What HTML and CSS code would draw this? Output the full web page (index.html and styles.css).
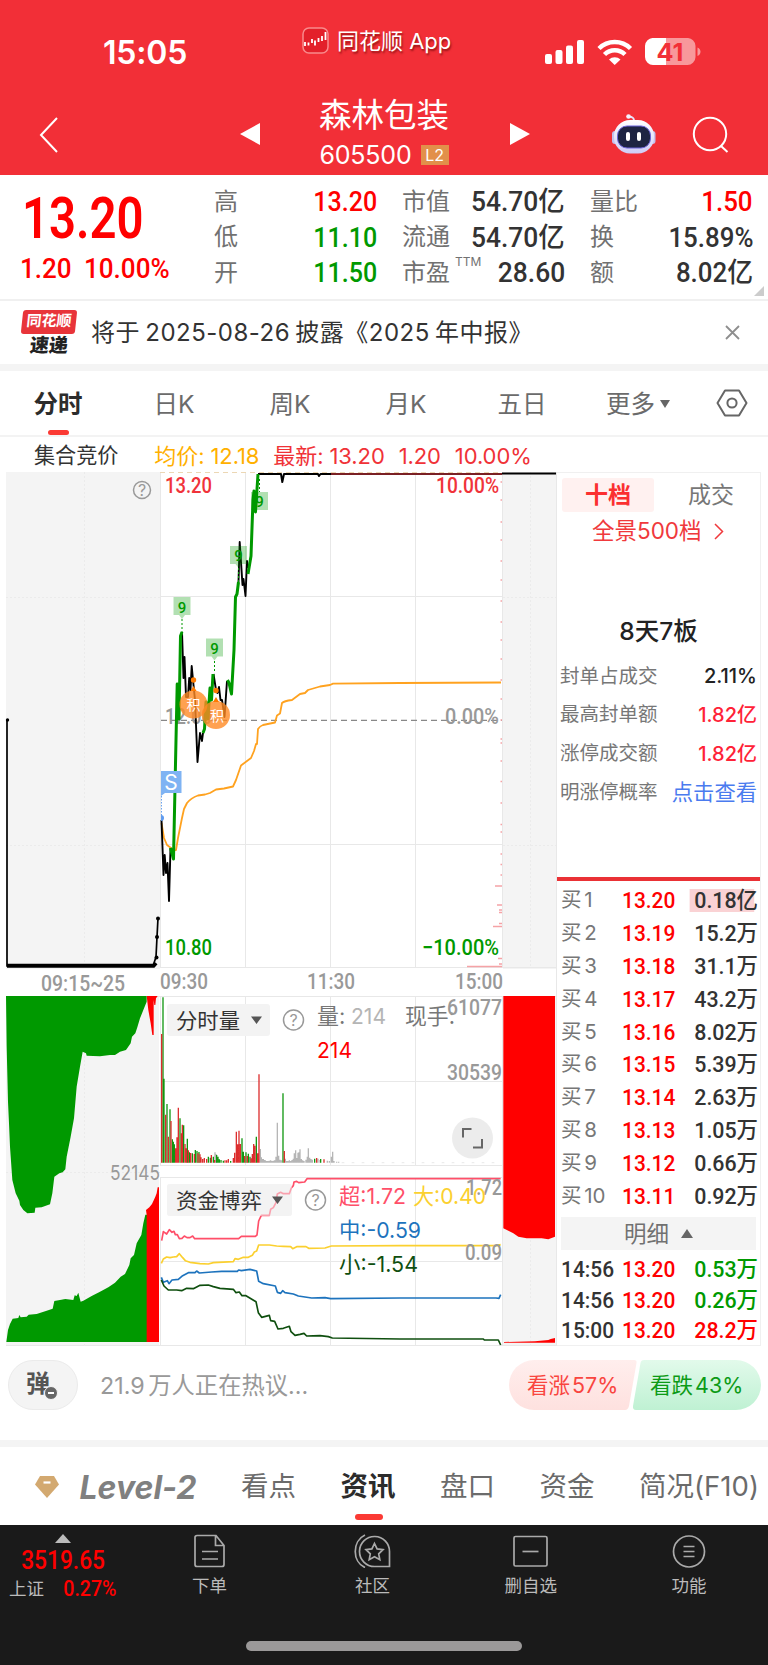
FILE: index.html
```
<!DOCTYPE html>
<html lang="zh-CN">
<head>
  <meta charset="utf-8">
  <meta name="viewport" content="width=device-width, initial-scale=1">
  <title>森林包装 605500</title>
  <link rel="stylesheet" href="styles.css">
</head>
<body>

<!-- header -->
<header class="header">
  <div class="status">
    <span class="time">15:05</span>
    <div class="app">
      <svg width="27" height="27" viewBox="0 0 27 27">
        <rect x="1" y="1" width="25" height="25" rx="6" fill="#e3202a" stroke="#f98a8c" stroke-width="1.5"/>
        <path d="M3 15v4M6.500 15.500v3M10 12v4M13 13.500v5M16.500 11v4M20 9v5M23.500 5v8" stroke="#fff" stroke-width="1.800"/>
      </svg>
      <span>同花顺 App</span>
    </div>
    <svg class="signals" width="156" height="28" viewBox="545 38 156 28">
      <g fill="#fff">
        <rect x="545" y="54" width="7" height="10" rx="2"/>
        <rect x="555.500" y="50" width="7" height="14" rx="2"/>
        <rect x="566" y="45.500" width="7" height="18.500" rx="2"/>
        <rect x="577" y="40" width="7" height="24" rx="2"/>
      </g>
      <g fill="none" stroke="#fff" stroke-width="4.500">
        <path d="M599 48.500a22.500 22.500 0 0 1 31.500 0"/>
        <path d="M604.500 54.500a14.500 14.500 0 0 1 20.500 0"/>
      </g>
      <path d="M609 59.500a8.500 8.500 0 0 1 11.500 0L614.700 65z" fill="#fff"/>
      <path d="M653 38h34a8 8 0 0 1 8.500 8v11a8 8 0 0 1-8.500 8h-34z" fill="#f8989b"/>
      <path d="M666 38h-12.500a8 8 0 0 0-8.500 8v11a8 8 0 0 0 8.500 8H666z" fill="#fff"/>
      <path d="M697.500 47.500c4 1.500 4 7 0 8.500z" fill="#f8989b"/>
      <text x="656.500" y="60.500" textLength="27" lengthAdjust="spacingAndGlyphs" class="batt">41</text>
    </svg>
  </div>
  <div class="nav">
    <svg class="back" width="20" height="36" viewBox="0 0 20 36"><path d="M18 1L2 18l16 17" fill="none" stroke="#fff" stroke-width="2"/></svg>
    <i class="tri-l"></i>
    <div class="stock">
      <div class="name">森林包装</div>
      <div class="code">605500 <b>L2</b></div>
    </div>
    <i class="tri-r"></i>
    <svg class="bot" width="46" height="42" viewBox="611 113 46 42">
      <defs>
        <linearGradient id="head" x1="0" y1="0" x2="0" y2="1"><stop offset="0" stop-color="#fff"/><stop offset="1" stop-color="#cfccf6"/></linearGradient>
      </defs>
      <path d="M634 121c0-3-1-4-5-4.500" fill="none" stroke="#e6e3fb" stroke-width="2"/>
      <circle cx="628.500" cy="116.500" r="2.300" fill="#f4f2ff"/>
      <rect x="612" y="131" width="6" height="13" rx="3" fill="#c4c1ee"/>
      <rect x="649.500" y="131" width="6" height="13" rx="3" fill="#c4c1ee"/>
      <rect x="614" y="120" width="40" height="33.500" rx="16" fill="url(#head)"/>
      <rect x="617.500" y="126" width="33" height="22" rx="9.500" fill="#1e2442" stroke="#6b62d8" stroke-width="1"/>
      <rect x="626" y="132" width="4" height="9" rx="2" fill="#fff"/>
      <rect x="637" y="132" width="4" height="9" rx="2" fill="#fff"/>
    </svg>
    <svg class="search" width="38" height="38" viewBox="0 0 38 38" fill="none" stroke="#fff" stroke-width="2"><circle cx="18" cy="18" r="16.200"/><path d="M29 30l6.500 6"/></svg>
  </div>
</header>

<!-- quote -->
<section class="quote">
  <div class="last">
    <div class="price"><span class="din">13.20</span></div>
    <div class="chg"><span class="din">1.20</span><span class="din">10.00%</span></div>
  </div>
  <dl class="c1">
    <div><dt>高</dt><dd class="red din">13.20</dd></div>
    <div><dt>低</dt><dd class="green din">11.10</dd></div>
    <div><dt>开</dt><dd class="green din">11.50</dd></div>
  </dl>
  <dl class="c2">
    <div><dt>市值</dt><dd class="din">54.70亿</dd></div>
    <div><dt>流通</dt><dd class="din">54.70亿</dd></div>
    <div><dt>市盈<sup>TTM</sup></dt><dd class="din">28.60</dd></div>
  </dl>
  <dl class="c3">
    <div><dt>量比</dt><dd class="red din">1.50</dd></div>
    <div><dt>换</dt><dd class="din">15.89%</dd></div>
    <div><dt>额</dt><dd class="din">8.02亿</dd></div>
  </dl>
  <i class="corner"></i>
</section>

<!-- notice -->
<section class="notice">
  <div class="express">
    <b class="ths">同花顺</b>
    <b class="sd">速递</b>
  </div>
  <p>将于 2025-08-26 披露《2025 年中报》</p>
  <svg width="15" height="15" viewBox="0 0 15 15"><path d="M1 1l13 13M14 1L1 14" stroke="#8e8e8e" stroke-width="1.800"/></svg>
</section>

<!-- period tabs -->
<nav class="periods">
  <a class="on">分时</a><a>日K</a><a>周K</a><a>月K</a><a>五日</a><a>更多<i></i></a>
  <svg width="32" height="28" viewBox="0 0 32 28" fill="none" stroke="#666" stroke-width="2"><path d="M9 1.500h14L30.500 14 23 26.500H9L1.500 14z" stroke-linejoin="round"/><circle cx="16" cy="14" r="4.600"/></svg>
</nav>
<div class="legend">
  <span>集合竞价</span>
  <span class="avg">均价: 12.18</span>
  <span class="now">最新: 13.20</span>
  <span class="now">1.20</span>
  <span class="now">10.00%</span>
</div>

<!-- chart and order book -->
<main class="board">
  <svg class="chart" width="557" height="875" viewBox="0 472 557 875">
    <!-- auction panels -->
    <g fill="#f4f4f4">
      <rect x="6" y="472" width="154" height="497"/>
      <rect x="503" y="472" width="53" height="497"/>
      <rect x="6" y="996" width="153" height="350"/>
      <rect x="503" y="996" width="53" height="350"/>
    </g>
    <!-- grid -->
    <g fill="none" stroke="#e8e8e8">
      <path d="M160.500 472V968M245.500 472V968M330.500 472V968M415.500 472V968M502.500 472V968M160 596.500H502M160 844.500H502M160 967.500H556"/>
      <path d="M6 996.500H556M160.500 996V1165M245.500 996V1165M330.500 996V1165M415.500 996V1165M502.500 996V1346M160 1081.500H502M160 1165.500H502"/>
      <path d="M160.500 1177V1346M245.500 1177V1346M330.500 1177V1346M415.500 1177V1346M160 1177.500H502M160 1261.500H502M6 1345.500H557M556.500 472V1346"/>
      <path d="M84.500 472V968M6 597.500H160M6 845.500H160M84.500 996V1346M6 1172.500H160M530.500 472V968M503 597.500H556M503 845.500H556M530.500 996V1346" stroke-dasharray="2 2" stroke="#ebebeb"/>
    </g>
    <path d="M160 472.500H502" stroke="#ecd7b4" stroke-dasharray="5 4"/>
    <path d="M161 720.300H502" stroke="#888" stroke-width="1.200" stroke-dasharray="6 4"/>

    <g class="axis">
      <text x="165" y="493" class="up" textLength="47" lengthAdjust="spacingAndGlyphs">13.20</text>
      <text x="436" y="493" class="up" textLength="63" lengthAdjust="spacingAndGlyphs">10.00%</text>
      <text x="165" y="724" textLength="47" lengthAdjust="spacingAndGlyphs">12.00</text>
      <text x="445" y="724" textLength="54" lengthAdjust="spacingAndGlyphs">0.00%</text>
      <text x="165" y="955" class="down" textLength="47" lengthAdjust="spacingAndGlyphs">10.80</text>
      <text x="422" y="955" class="down" textLength="77" lengthAdjust="spacingAndGlyphs">−10.00%</text>
      <text x="41" y="990.500" textLength="84" lengthAdjust="spacingAndGlyphs">09:15~25</text>
      <text x="160" y="989" textLength="48" lengthAdjust="spacingAndGlyphs">09:30</text>
      <text x="307" y="989" textLength="48" lengthAdjust="spacingAndGlyphs">11:30</text>
      <text x="455" y="989" textLength="48" lengthAdjust="spacingAndGlyphs">15:00</text>
      <text x="110" y="1179.500" class="small" textLength="50" lengthAdjust="spacingAndGlyphs">52145</text>
    </g>
    <g class="help">
      <circle cx="142" cy="490" r="8.500"/><text x="142" y="495.500">?</text>
    </g>

    <!-- auction price -->
    <path d="M7 720V966H153L156 957L157 937L158 918" fill="none" stroke="#000" stroke-width="1.700"/>
    <path d="M7 965.800H153.500L156 963" fill="none" stroke="#000" stroke-width="4"/>
    <circle cx="7.500" cy="720" r="1.700"/><circle cx="158" cy="918.500" r="2"/><circle cx="157" cy="937" r="2"/><circle cx="156.500" cy="957.500" r="2"/>

    <!-- price levels on the right edge -->
    <path d="M467 966.500H502M493 926.500H502M495 886H502M497 905H502M498 958.500H502M499 964H502M499 910H502M499 912.500H502M499 923.500H502M500.500 720H502M500.500 739H502M500.500 743H502M500.500 761H502M500.500 781.500H502M500.500 803H502M500.500 824.500H502M500.500 832H502M500.500 854H502M500.500 864.500H502M500.500 875H502M500.500 482H502M500.500 500H502M500.500 522H502M500.500 540H502M500.500 561H502M500.500 580H502M500.500 601H502M500.500 622H502M500.500 640H502M500.500 659H502M500.500 680H502M500.500 699H502" stroke="#f5a3a6" stroke-width="1.600"/>

    <!-- average line -->
    <path class="line" stroke="#ffa21f" stroke-width="1.800" d="M161.500 823L164 838L167 845L171 848L173 851L176 850L178 838L182 818L184 809L187 803Q191 798 198 795.500L205 794.500L210 793L216 789.500L224 788.500L233 786.500L236 780L241 765.500L251 758L254 751L256 744L257 744L258 729Q260 726 263 725L275 722.500L277 715.500L280 713.500L282 703Q284 701 292 700L300 694L305 693L308 690L320 686.500L330 685L333 683.700L400 683L501 682.500"/>

    <!-- price -->
    <g class="line" stroke-width="1.900">
      <path stroke="#000" d="M161.500 820L163.500 875L164.700 855L166 873L167.500 863L169 901L170.500 848"/>
      <path stroke="#000" d="M182 632L183.500 678L184.500 657L186 697L188 697L189.200 678L190.500 690L191.700 666L193 680L195 700L197.500 762L200 733L202 741L203 733"/>
      <path stroke="#000" d="M213.500 674L216 690L217.500 693L219 687L220.500 700L222 700L224.500 717L227 681"/>
      <path stroke="#000" d="M238.500 582L239.700 542L242.500 585L243.500 579L245.500 596L247 561L248 568"/>
      <path stroke="#000" stroke-width="2" d="M258 474H281L282.300 482L284 474H318L319 476L320.500 474H331"/>
    </g>
    <g class="line" stroke="#090" stroke-width="3">
      <path d="M170.500 848L173.500 859L176 740L177.200 684L179 719L180.500 636L182 632"/>
      <path d="M203 733L204.500 729L206 702L208 719L210 688L211.500 700L213 674"/>
      <path d="M227.500 680L229 683L231.500 694L234 650L235.500 597L237 594L238.500 582"/>
      <path d="M248 574L251 556L253 500L254 491L255.500 512L258 474"/>
    </g>
    <path d="M331 474H502" stroke="#7a2024" stroke-width="2"/>
    <path d="M502 473.500H556" stroke="#000" stroke-width="2"/>

    <!-- nine-count flags -->
    <g class="flag">
      <path d="M173.500 597h17v18h-5.500l-3 4-3-4h-5.500z"/><path d="M206 638.500h17v18h-5.500l-3 4-3-4H206z"/>
      <path d="M230 546h17v18h-5.500l-3 4-3-4H230z"/><path d="M251 492h17v18h-17z"/>
      <path class="stem" d="M182 619V632M214.500 661V673M238.500 568V582M259.500 479V492"/>
      <text x="182" y="612.500">9</text><text x="214.500" y="654">9</text><text x="238.500" y="561">9</text><text x="259.500" y="507">9</text>
    </g>
    <!-- event badges -->
    <g fill="#ff8a24" fill-opacity=".8">
      <circle cx="193.500" cy="704.500" r="14"/><circle cx="216" cy="715" r="14"/>
    </g>
    <g fill="#ff7a00"><circle cx="193.500" cy="680" r="2.700"/><circle cx="216" cy="690.500" r="2.700"/><path d="M190.500 691l3-5 3 5zM213 702l3-5 3 5z"/></g>
    <text class="event" x="193.500" y="710">积</text><text class="event" x="217" y="720.500">积</text>
    <!-- sell point -->
    <path d="M161 771h20.500v22H165l-4 3z" fill="#7fb3f3"/>
    <path d="M161.500 796V817" stroke="#6aa4ef" stroke-dasharray="1.500 1.500"/>
    <path d="M161 815a3 3 0 0 1 0 6z" fill="#5f9bef"/>
    <text class="sell" x="171" y="789.500">S</text>

    <!-- auction volume -->
    <g transform="translate(0 980) scale(.33333)">
      <path fill="#090" d="M18 48L20 200L24 365L27 430L30 500L37 600L47 640L58 662L60 675L70 690L82 700L104 698L106 683L125 682L150 673L157 640L163 590L178 580L188 577L196 568L200 530L212 470L222 415L230 320L240 260L248 215L258 220L260 227L300 229L330 225L345 225L360 215L378 210L392 190L396 170L406 160L412 142L420 115L430 90L440 65V48z"/>
      <path fill="red" d="M440 48L445 90L452 130L457 165H461V60L463 75H466L468 55L473 48z"/>
      <path fill="#090" d="M19 1086L24 1050L30 1032L38 1016L55 1014L58 1005L62 1012L80 1010L86 1004L110 1002L140 992L158 986L163 963L180 960L196 957L220 960L224 946L230 948L235 938L238 950L242 965L250 962L275 948L300 935L325 922L345 908L362 890L375 882L388 855L392 835L402 825L410 790L424 765L430 730L436 704H441V1086z"/>
      <path fill="red" d="M438 690L448 682L456 672L466 650L470 640L473 622H477V1086H440V704z"/>
      <path fill="red" d="M1510 48H1665V770L1645 778L1625 775L1580 775L1555 770L1540 760L1525 752L1510 745z"/>
      <path fill="red" d="M1512 1086L1605 1084L1645 1080L1652 1077L1665 1074V1088H1512z"/>
    </g>

    <!-- volume bars -->
    <g transform="translate(0 980) scale(.33333)" fill="none" stroke-width="3.900">
      <path stroke="#b5b5b5" d="M645 548V517M648 548V522M781 548V507M784 548V532M787 548V537M790 548V537M793 548V540M796 548V541M800 548V543M804 548V543M808 548V542M812 548V541M816 548V543M820 548V542M824 548V541M828 548V530M832 548V428M836 548V527M840 548V539M844 548V541M856 548V536M860 548V543M864 548V543M868 548V541M872 548V543M876 548V540M880 548V536M883 548V520M887 548V511M890 548V534M894 548V518M897 548V517M900 548V508M904 548V537M908 548V541M912 548V543M918 548V539M922 548V530M925 548V505M929 548V533M933 548V537M937 548V539M954 548V536M960 548V540M982 548V542M988 548V543M994 548V530M998 548V515M1002 548V543M1010 548V545M1016 548V545"/>
      <path stroke="#0f960f" d="M489 548V52M492 548V296M501 548V372M510 548V388M517 548V478M520 548V485M523 548V493M540 548V415M551 548V436M562 548V476M568 548V517M577 548V520M586 548V510M591 548V513M597 548V516M625 548V530M631 548V533M640 548V530M650 548V525M654 548V530M658 548V538M663 548V540M670 548V542M692 548V543M726 548V475M730 548V515M738 548V517M745 548V521M750 548V530M769 548V470M849 548V340M944 548V536M962 548V537"/>
      <path stroke="#dc2c2c" d="M485 548V162M497 548V404M505 548V470M513 548V423M527 548V505M531 548V472M535 548V383M544 548V460M547 548V434M555 548V492M559 548V505M565 548V511M572 548V519M583 548V522M594 548V520M600 548V523M603 548V532M608 548V537M613 548V534M620 548V537M634 548V525M644 548V540M675 548V541M680 548V541M685 548V537M700 548V534M704 548V518M709 548V455M713 548V493M717 548V452M721 548V492M734 548V528M742 548V528M753 548V535M757 548V522M761 548V492M765 548V497M773 548V520M777 548V283M853 548V513M950 548V534M972 548V538"/>
      <path stroke="#ddd" stroke-width="2" stroke-dasharray="8 22" d="M1025 548H1505"/>
    </g>

    <!-- fund flow -->
    <rect x="167" y="1184" width="125" height="32" rx="3" fill="#f3f3f3"/>
    <g transform="translate(0 980) scale(.33333)" class="line" stroke-width="5">
      <path stroke="#ff4f69" d="M485 782L490 755L500 762L508 749L516 757L522 754L526 764L532 764L538 776L546 775L553 768L561 773L570 773L578 768L584 776H716L724 769H766L771 765L776 723L784 706H808L812 688L820 683L828 668L832 642L842 637L850 641H868L874 624L880 617L882 606L890 604L896 608L914 606L921 596H1502"/>
      <path stroke="#fbd02f" d="M484 850L490 837L500 831L510 833L520 831L530 830L538 821L548 833L556 842L570 847L600 851L625 852L640 848L700 845L705 836L715 838L730 832L745 832L757 826L763 816L770 813L776 795L808 795L830 798L850 799L872 800L878 806L890 800H918L926 805L975 804L994 798L1200 797H1490L1502 794"/>
      <path stroke="#1d73bd" d="M484 892L490 907L502 902L507 911L516 900L535 898L548 887L565 878H585L590 873L598 879L635 876L665 874L712 874L716 870L724 872L750 868L770 873L776 904L790 911L826 918L832 937L842 940L848 932L855 938L880 942L895 948L935 954L975 953L992 956L1200 954H1488L1497 955L1502 944"/>
      <path stroke="#0f4f0f" d="M484 900L492 918L505 930L530 930L545 932L560 925L580 926L600 916L625 915L640 920L660 925L700 928L708 938L718 936L726 947L738 947L768 965L775 998L785 1012L808 1006L812 1022L824 1024L834 1047L850 1045L868 1039L873 1055L885 1066L900 1063L912 1060L920 1068L960 1067L985 1070L997 1074L1200 1077H1450L1453 1080H1495L1502 1095"/>
    </g>
    <rect x="167" y="1184" width="125" height="32" rx="3" fill="#f3f3f3" fill-opacity=".5"/>

    <!-- chart controls -->
    <rect x="167" y="1004" width="103" height="32" rx="3" fill="#f3f3f3"/>
    <g class="ctl">
      <text x="176" y="1027.500" textLength="64" lengthAdjust="spacingAndGlyphs">分时量</text>
      <text x="176" y="1207.500" textLength="86" lengthAdjust="spacingAndGlyphs">资金博弈</text>
      <path d="M251 1016.500h11l-5.500 7.500zM272 1196.500h11l-5.500 7.500z" fill="#555"/>
    </g>
    <g class="help">
      <circle cx="293.500" cy="1020" r="10"/><text x="293.500" y="1026">?</text>
      <circle cx="315.500" cy="1200" r="10"/><text x="315.500" y="1206">?</text>
    </g>
    <g class="vals">
      <text x="317" y="1024" fill="#777">量:</text>
      <text x="351" y="1024" fill="#b5b5b5" textLength="35" lengthAdjust="spacingAndGlyphs">214</text>
      <text x="405" y="1024" fill="#777" textLength="50" lengthAdjust="spacingAndGlyphs">现手:</text>
      <text x="317" y="1058" fill="red" textLength="35" lengthAdjust="spacingAndGlyphs">214</text>
    </g>
    <g class="axis">
      <text x="447" y="1014.500" textLength="55" lengthAdjust="spacingAndGlyphs">61077</text>
      <text x="447" y="1079.500" textLength="55" lengthAdjust="spacingAndGlyphs">30539</text>
      <text x="466" y="1194.500" textLength="36" lengthAdjust="spacingAndGlyphs">1.72</text>
      <text x="465" y="1259.500" textLength="37" lengthAdjust="spacingAndGlyphs">0.09</text>
    </g>
    <g class="vals">
      <text x="339" y="1204" fill="#ff4f69" textLength="67" lengthAdjust="spacingAndGlyphs">超:1.72</text>
      <text x="413" y="1204" fill="#fbd02f" textLength="73" lengthAdjust="spacingAndGlyphs">大:0.40</text>
      <text x="339" y="1238" fill="#1d73bd" textLength="82" lengthAdjust="spacingAndGlyphs">中:-0.59</text>
      <text x="339" y="1272" fill="#0f4f0f" textLength="79" lengthAdjust="spacingAndGlyphs">小:-1.54</text>
    </g>
    <circle cx="472.500" cy="1138" r="20.500" fill="#ececec"/>
    <path d="M463 1137.500V1129H471.500M473 1147.500H482V1139" fill="none" stroke="#666" stroke-width="2"/>
  </svg>

  <aside class="book">
    <div class="switch"><b>十档</b><span>成交</span></div>
    <div class="pano">全景500档<svg width="10" height="17" viewBox="0 0 10 17"><path d="M1 1l7.500 7.500L1 16" fill="none" stroke="#f0393c" stroke-width="1.500"/></svg></div>
    <div class="streak">8天7板</div>
    <ul class="stats">
      <li>封单占成交<b>2.11%</b></li>
      <li>最高封单额<b class="rose">1.82亿</b></li>
      <li>涨停成交额<b class="rose">1.82亿</b></li>
      <li>明涨停概率<a>点击查看</a></li>
    </ul>
    <ul class="bids">
      <li><span>买 1</span><b>13.20</b><em class="hot">0.18亿</em></li>
      <li><span>买 2</span><b>13.19</b><em>15.2万</em></li>
      <li><span>买 3</span><b>13.18</b><em>31.1万</em></li>
      <li><span>买 4</span><b>13.17</b><em>43.2万</em></li>
      <li><span>买 5</span><b>13.16</b><em>8.02万</em></li>
      <li><span>买 6</span><b>13.15</b><em>5.39万</em></li>
      <li><span>买 7</span><b>13.14</b><em>2.63万</em></li>
      <li><span>买 8</span><b>13.13</b><em>1.05万</em></li>
      <li><span>买 9</span><b>13.12</b><em>0.66万</em></li>
      <li><span>买 10</span><b>13.11</b><em>0.92万</em></li>
    </ul>
    <div class="detail">明细<i></i></div>
    <ul class="bids trades">
      <li><time>14:56</time><b>13.20</b><em class="green">0.53万</em></li>
      <li><time>14:56</time><b>13.20</b><em class="green">0.26万</em></li>
      <li><time>15:00</time><b>13.20</b><em class="red">28.2万</em></li>
    </ul>
  </aside>
</main>

<!-- discussion -->
<section class="talk">
  <div class="danmu">弹<i></i></div>
  <p>21.9 万人正在热议...</p>
  <div class="vote">
    <svg width="252" height="50" viewBox="0 0 252 50">
      <defs>
        <linearGradient id="up" x1="0" y1="0" x2="0" y2="1"><stop offset="0" stop-color="#ffeeed"/><stop offset="1" stop-color="#fee1df"/></linearGradient>
        <linearGradient id="dn" x1="0" y1="0" x2="0" y2="1"><stop offset="0" stop-color="#e2faeb"/><stop offset="1" stop-color="#bff1d3"/></linearGradient>
      </defs>
      <path fill="url(#up)" d="M25 0H125q3 0 2.500 3L120 46q-1 4-4 4H25a25 25 0 0 1 0-50z"/>
      <path fill="url(#dn)" d="M227 0H135q-3 0-3.500 3L124 46q-.5 4 3 4H227a25 25 0 0 0 0-50z"/>
    </svg>
    <span class="bull">看涨 57%</span><span class="bear">看跌 43%</span>
  </div>
</section>

<!-- content tabs -->
<nav class="tabs">
  <svg width="24" height="22" viewBox="0 0 24 22"><path d="M5 0h14l5 8.500L12 22 0 8.500z" fill="#d3a970"/><path d="M8.500 6.500h7" stroke="#fff" stroke-width="2.200"/></svg>
  <a class="lv2">Level-2</a><a>看点</a><a class="on">资讯</a><a>盘口</a><a>资金</a><a>简况(F10)</a>
</nav>

<!-- bottom bar -->
<footer class="bar">
  <div class="index">
    <i></i>
    <div class="pt"><span class="din">3519.65</span></div>
    <div class="sub">上证<span class="din">0.27%</span></div>
  </div>
  <div class="item">
    <svg width="32" height="34" viewBox="0 0 32 34"><path d="M3 1.500h19l8 10v19a2 2 0 0 1-2 2H3a2 2 0 0 1-2-2V3.500a2 2 0 0 1 2-2zM21.500 1.500v10h8.500M8 17.500h16M8 25h16"/></svg>
    下单
  </div>
  <div class="item">
    <svg width="37" height="34" viewBox="0 0 37 34"><path d="M35.500 32.500V18A15 15 0 1 0 20.500 32.500zM11 1C-2 7-2 28 11 33.500M20.500 9.500l2.600 5.400 5.900.8-4.300 4.100 1.100 5.900-5.300-2.900-5.300 2.900 1.100-5.900-4.300-4.100 5.900-.8z"/></svg>
    社区
  </div>
  <div class="item">
    <svg width="35" height="34" viewBox="0 0 35 34"><rect x="1" y="2.500" width="33" height="29.500" rx="1.500"/><path d="M9.500 17.500h16"/></svg>
    删自选
  </div>
  <div class="item">
    <svg width="34" height="34" viewBox="0 0 34 34"><circle cx="17" cy="17.500" r="15.500"/><path d="M11.500 12.500h11M11.500 17.500h11M11.500 22.500h11"/></svg>
    功能
  </div>
  <i class="home"></i>
</footer>

</body>
</html>
```
FILE: styles.css
```
* {box-sizing: border-box}

body {
  margin: 0;
  width: 768px;
  height: 1665px;
  overflow: hidden;
  background: #fff;
  color: #333;
  font-family: Inter, "Noto Sans CJK SC", sans-serif;
  line-height: 1;
}

p, dl, dd, ul {
  margin: 0;
  padding: 0;
}

ul {list-style: none}
i, em {font-style: normal}

.red {color: #f00 !important}
.green {color: #090 !important}

/* narrow figures */
.din {
  display: inline-block;
  font-family: Roboto, "Noto Sans CJK SC", sans-serif;
  font-weight: 500;
  transform: scaleX(.91);
  transform-origin: right;
}

/* header */
.header {
  height: 175px;
  background: #f22f37;
  color: #fff;
}

.status {
  display: flex;
  height: 96px;
}

.time {
  width: 199px;
  margin: 37px 0 0 103px;
  font-size: 32px;
  font-weight: 600;
  letter-spacing: -.2px;
}

.app {
  display: flex;
  align-items: center;
  gap: 8px;
  width: 243px;
  height: 27px;
  margin-top: 27px;
  font-size: 22px;
  text-shadow: 1px 2px 2px rgba(90, 0, 0, .6);
}

.signals {margin-top: 38px}

.batt {
  font: 700 24px Inter, sans-serif;
  fill: #f22f37;
}

.nav {
  display: flex;
  align-items: flex-start;
}

.back {margin: 21px 0 0 39px}

.tri-l, .tri-r {
  margin-top: 27px;
  border: solid transparent;
  border-width: 11px 0;
}

.tri-l {
  margin-left: 181px;
  border-right: 20px solid #fff;
}

.tri-r {border-left: 20px solid #fff}

.stock {
  width: 250px;
  padding-right: 2px;
  text-align: center;
}

.name {
  margin-top: 3px;
  font-size: 32.500px;
  line-height: 34px;
}

.code {
  display: flex;
  justify-content: center;
  align-items: center;
  gap: 9px;
  margin-top: 12px;
  font-size: 25px;
  line-height: 20px;
  letter-spacing: -.2px;
}

.code b {
  width: 28px;
  height: 20px;
  background: #e2904a;
  font-size: 16px;
  font-weight: 400;
}

.bot {margin: 17px 0 0 81px}
.search {margin: 20px 0 0 35px}

/* quote */
.quote {
  position: relative;
  display: flex;
  height: 126px;
  border-bottom: 2px solid #f0f0f0;
}

.last {
  width: 214px;
  color: #f00;
}

.price {
  margin: 14px 0 0 22px;
  font-size: 57px;
}

.price .din {
  font-weight: 600;
  transform: scaleX(.83);
  transform-origin: left;
}

.chg {
  display: flex;
  gap: 8px;
  margin: 8px 0 0 20px;
  font-size: 28px;
}

.chg .din {
  transform: scaleX(.93);
  transform-origin: left;
}

.quote dl {
  display: flex;
  flex-direction: column;
  padding-top: 9px;
}

.quote dl div {
  display: flex;
  justify-content: space-between;
  align-items: center;
  height: 35.6px;
  white-space: nowrap;
}

.quote dt {
  position: relative;
  font-size: 24px;
  color: #717171;
}

.quote dd {font-size: 27.5px}

.quote sup {
  position: absolute;
  left: 53px;
  top: -5px;
  font-size: 12px;
}

.c1 {width: 163px}
.c2 {width: 163px; margin-left: 25px}
.c3 {width: 163px; margin-left: 25px}
.c2 .din {transform: scaleX(.96)}
.c3 .din {transform: scaleX(.94)}

.corner {
  position: absolute;
  right: 4px;
  bottom: 3px;
  border: 5px solid #ccc;
  border-left-color: transparent;
  border-top-color: transparent;
}

/* notice */
.notice {
  display: flex;
  align-items: center;
  height: 63px;
  padding-left: 22px;
}

.express {
  width: 54px;
  height: 46px;
  text-align: center;
}

.ths {
  display: block;
  height: 24px;
  border-radius: 3px;
  background: #e8343a;
  color: #fff;
  font-size: 15px;
  line-height: 22px;
  transform: skewX(-6deg);
}

.sd {
  display: block;
  color: #222;
  font-size: 19px;
  font-weight: 900;
  line-height: 23px;
  transform: skewX(-6deg);
}

.notice p {
  width: 634px;
  margin-left: 15px;
  font-size: 24px;
  letter-spacing: .5px;
  word-spacing: -2px;
  white-space: nowrap;
}

/* period tabs */
.periods {
  display: grid;
  grid-template-columns: repeat(6, 116px) auto;
  align-items: center;
  height: 73px;
  padding-top: 2px;
  border-top: 7px solid #f4f4f4;
  border-bottom: 2px solid #f3f3f3;
  font-size: 24.500px;
  color: #6b6b6b;
  text-align: center;
}

.periods svg {margin: -2px 0 0 20px}

.periods .on, .tabs .on {
  position: relative;
  color: #2c2c2c;
  font-weight: 700;
}

.periods .on::after, .tabs .on::after {
  content: "";
  position: absolute;
  left: 48px;
  top: 38px;
  width: 21px;
  height: 5px;
  border-radius: 3px;
  background: #fb3a34;
}

.periods i {
  display: inline-block;
  margin: 0 0 5px 5px;
  border: solid transparent;
  border-width: 8px 5.500px 0;
  border-top-color: #666;
}

.legend {
  display: flex;
  align-items: center;
  height: 35px;
  padding: 2px 0 0 34px;
  font-size: 22px;
  letter-spacing: -.1px;
  white-space: pre;
}

.legend span {margin-right: 14px}
.legend span:first-child {margin-right: 36px; font-size: 21.200px}
.avg {color: #ffb000}
.now {color: #f03237}

/* chart */
.board {
  display: flex;
  height: 875px;
}

.chart {
  display: block;
  flex: none;
}

.line {
  fill: none;
  stroke-linejoin: round;
}

.axis {
  font: 500 22px Roboto, sans-serif;
  fill: #999;
}

.axis .up {fill: #f0333a}
.axis .down {fill: #090}
.axis .small {font: 400 20px Inter, sans-serif}

.help circle {
  fill: none;
  stroke: #999;
  stroke-width: 1.500;
}

.help text {
  font: 400 16px Inter, sans-serif;
  fill: #999;
  text-anchor: middle;
}

.flag {
  fill: #090;
  text-anchor: middle;
  font: 500 15px Roboto, sans-serif;
}

.flag path {fill-opacity: .3}

.flag .stem {
  stroke: #090;
  stroke-dasharray: 2 2;
}

.event {
  fill: #fff;
  font: 14px "Noto Sans CJK SC", sans-serif;
  text-anchor: middle;
}

.sell {
  fill: #fff;
  font: 21px Inter, sans-serif;
  text-anchor: middle;
}

.ctl {
  font: 21px "Noto Sans CJK SC", sans-serif;
  fill: #333;
}

.vals {font: 22px Inter, "Noto Sans CJK SC", sans-serif}

/* order book */
.book {
  width: 204px;
  height: 874px;
  border: solid #f0f0f0;
  border-width: 1px 1px 1px 0;
}

.switch {
  display: flex;
  margin: 5px 0 0 5px;
  font-size: 23px;
  line-height: 34px;
  color: #777;
  text-align: center;
}

.switch b {
  width: 92px;
  border-radius: 3px;
  background: #fff1f0;
  color: #fb3030;
}

.switch span {
  width: 46px;
  margin-left: 34px;
}

.pano {
  display: flex;
  align-items: center;
  gap: 12px;
  margin: 7px 0 0 35px;
  font-size: 22.500px;
  line-height: 24px;
  color: #f0393c;
}

.streak {
  margin-top: 73px;
  height: 30px;
  line-height: 30px;
  font-size: 24.500px;
  font-weight: 500;
  color: #222;
  text-align: center;
}

.stats {
  height: 235px;
  padding: 11px 3px 0 3px;
  border-bottom: 4px solid #ea3135;
  color: #777;
}

.stats li {
  display: flex;
  justify-content: space-between;
  align-items: center;
  height: 38.7px;
  font-size: 19.5px;
}

.stats b {
  color: #222;
  font-size: 20px;
  font-weight: 500;
}

.stats .rose {color: #ff2237}

.stats a {
  font-size: 21.300px;
  color: #4a7bef;
}

.bids {padding: 3px 2px 0 4px}

.bids li {
  display: flex;
  align-items: center;
  height: 32.850px;
  font-size: 21px;
  white-space: nowrap;
}

.bids span {
  width: 61px;
  color: #777;
  font-size: 20.500px;
  word-spacing: -3px;
}

.bids b, .bids em, .bids time {
  font-family: Roboto, "Noto Sans CJK SC", sans-serif;
  font-weight: 500;
  font-size: 22.500px;
}

.bids b {
  width: 52px;
  color: #f00;
  transform: scaleX(.93);
  transform-origin: left;
}

.bids em {
  flex: 1;
  text-align: right;
  transform: scaleX(.95);
  transform-origin: right;
}

.bids .hot {background: linear-gradient(#fad2d4, #fad2d4) 12px 0 / 68px 23px no-repeat}

.detail {
  display: flex;
  justify-content: center;
  align-items: center;
  gap: 12px;
  width: 195px;
  height: 33px;
  margin: 5px 0 3px 4px;
  background: #f4f4f4;
  color: #717171;
  font-size: 22.500px;
}

.detail i, .index i {
  border: solid transparent;
  border-width: 0 6px 9px;
  border-bottom-color: #666;
}

.trades {padding-top: 1px}
.trades li {height: 30.300px}

.trades time {
  width: 61px;
  transform: scaleX(.93);
  transform-origin: left;
}

/* discussion */
.talk {
  display: flex;
  height: 93px;
  padding: 13px 7px 0 8px;
}

.danmu {
  position: relative;
  width: 70px;
  height: 50px;
  border: 1px solid #ebebeb;
  border-radius: 25px;
  background: #f4f4f4;
  color: #555;
  font-size: 24px;
  font-weight: 700;
  line-height: 46px;
  padding-left: 17px;
}

.danmu i {
  position: absolute;
  left: 35px;
  top: 25px;
  width: 14px;
  height: 14px;
  border: 1px solid #f4f4f4;
  border-radius: 50%;
  background: linear-gradient(#fff, #fff) center / 6px 2px no-repeat #666;
}

.talk p {
  flex: 1;
  margin-left: 22px;
  font-size: 23.300px;
  line-height: 51px;
  word-spacing: -3px;
  color: #999;
}

.vote {
  position: relative;
  width: 252px;
  font-size: 21.500px;
  word-spacing: -4px;
}

.vote span {
  position: absolute;
  top: 15px;
  white-space: nowrap;
}

.bull {left: 18px; color: #f9453f}
.bear {left: 141px; color: #0d9b17}

/* content tabs */
.tabs {
  display: flex;
  align-items: center;
  justify-content: space-between;
  height: 85px;
  padding: 2px 9px 0 35px;
  border-top: 7px solid #f4f4f4;
  font-size: 27.500px;
  color: #6b6b6b;
  white-space: nowrap;
}

.tabs .lv2 {
  margin: 0 0 0 -24px;
  font: italic 700 32px Inter, sans-serif;
  color: #808080;
}

.tabs .on::after {
  left: 14px;
  top: 41px;
  width: 28px;
  height: 6px;
}

/* bottom bar */
.bar {
  position: relative;
  display: flex;
  height: 140px;
  background: #1a1a1a;
  color: #bbb;
  font-size: 17.500px;
}

.index {
  width: 126px;
  padding-top: 9px;
  text-align: center;
}

.index i {
  display: block;
  width: 16px;
  margin: 0 auto;
  border-width: 0 8px 9px;
  border-bottom-color: #bbb;
}

.pt {
  margin-top: 5px;
  color: #f00;
  font-size: 25px;
}

.pt .din {transform-origin: center}

.sub {
  display: flex;
  justify-content: space-between;
  align-items: center;
  margin-top: 5px;
  padding: 0 9px;
}

.sub .din {
  color: #f00;
  font-size: 21.500px;
}

.item {
  display: flex;
  flex-direction: column;
  align-items: center;
  gap: 9px;
  width: 158.500px;
  padding-top: 9px;
}

.index + .item {width: 168px}

.item svg {
  fill: none;
  stroke: #aaa;
  stroke-width: 1.700;
}

.home {
  position: absolute;
  left: 246px;
  bottom: 14px;
  width: 276px;
  height: 10px;
  border-radius: 5px;
  background: #9b9999;
}
```
